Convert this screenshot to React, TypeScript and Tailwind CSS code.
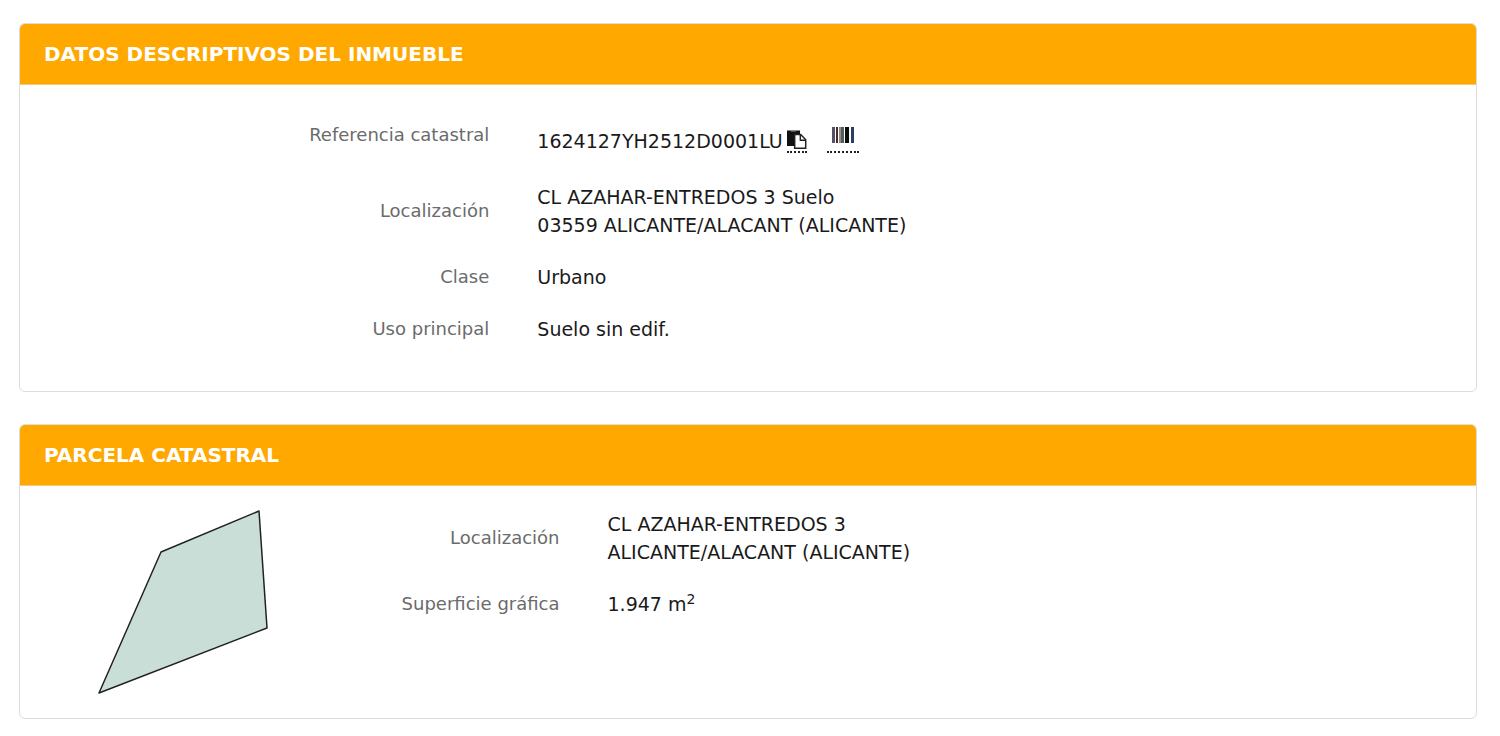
import type { ReactNode } from 'react';

interface PanelProps {
  title: string;
  children: ReactNode;
}

function Panel({ title, children }: PanelProps) {
  return (
    <section className="overflow-hidden rounded-md border border-[#dddddd] bg-white">
      <h2 className="border-b border-[#f3c877] bg-[#ffa800] px-6 py-4 text-[20px] leading-7 font-bold text-white uppercase">
        {title}
      </h2>
      {children}
    </section>
  );
}

function CopyIcon() {
  return (
    <svg viewBox="0 0 20 20" className="block h-5 w-5" aria-hidden="true">
      <path d="M0 1.500h13V6H8v11H0z" fill="#111" />
      <path d="M4 2.500h5" stroke="#555" strokeWidth="1" />
      <path d="M7.700 5.500h6l5 5.300v8.500h-11z" fill="#fff" stroke="#222" strokeWidth="1.500" />
      <path d="M13.300 6v5.200h5" fill="none" stroke="#222" strokeWidth="1.400" />
    </svg>
  );
}

function BarcodeIcon() {
  return (
    <svg viewBox="0 0 22 16" className="block h-4 w-[22px]" aria-hidden="true">
      <rect x="0" y="0" width="3" height="16" fill="#57506a" />
      <rect x="4" y="0" width="2" height="16" fill="#3a3034" />
      <rect x="7" y="0" width="2" height="16" fill="#a88672" />
      <rect x="9" y="0" width="3" height="16" fill="#4c6068" />
      <rect x="13" y="0" width="4" height="16" fill="#0b0b0b" />
      <rect x="19" y="0" width="3" height="16" fill="#2b3f60" />
    </svg>
  );
}

// Outline of the plot
function ParcelMap() {
  return (
    <svg viewBox="0 0 224 184" className="block h-[184px] w-56" role="img" aria-label="Parcela">
      <polygon
        points="215,1 223,118 55,183 117,42"
        fill="#c8ded6"
        stroke="#222"
        strokeWidth="1.500"
        strokeLinejoin="round"
      />
    </svg>
  );
}

function Row({ label, children, narrow }: { label: string; children: ReactNode; narrow?: boolean }) {
  return (
    <div className="flex items-center">
      <dt className={narrow ? 'w-1/4 pr-6 text-right text-[#6b6b6b]' : 'w-1/3 pr-6 text-right text-[#6b6b6b]'}>
        {label}
      </dt>
      <dd className="flex-1 pl-6 text-[19px] text-[#1a1a1a]">{children}</dd>
    </div>
  );
}

export default function App() {
  return (
    <main className="flex flex-col gap-8 bg-white pt-[23px] pr-[23px] pb-4 pl-[19px] font-['Verdana','DejaVu_Sans',sans-serif] text-[18px] leading-7">
      <Panel title="Datos descriptivos del inmueble">
        <dl className="flex flex-col gap-6 px-6 pt-9 pb-12">
          <div className="flex items-start">
            <dt className="w-1/3 pr-6 text-right text-[#6b6b6b]">Referencia catastral</dt>
            <dd className="flex flex-1 items-start pt-1 pb-1 pl-6 text-[19px] text-[#1a1a1a]">
              <span className="pt-0.5">1624127YH2512D0001LU</span>
              <button type="button" aria-label="Copiar referencia" className="mt-1 ml-1 border-b-2 border-dotted border-[#222] pb-0.5">
                <CopyIcon />
              </button>
              <a href="#codigo" aria-label="Código de barras" className="ml-5 border-b-2 border-dotted border-[#222] px-[5px] pt-0.5 pb-2">
                <BarcodeIcon />
              </a>
            </dd>
          </div>
          <Row label="Localización">
            CL AZAHAR-ENTREDOS 3 Suelo
            <br />
            03559 ALICANTE/ALACANT (ALICANTE)
          </Row>
          <Row label="Clase">Urbano</Row>
          <Row label="Uso principal">Suelo sin edif.</Row>
        </dl>
      </Panel>

      <Panel title="Parcela catastral">
        <div className="flex p-6">
          <div className="w-[250px] shrink-0">
            <ParcelMap />
          </div>
          <dl className="flex flex-1 flex-col gap-6">
            <Row label="Localización" narrow>
              CL AZAHAR-ENTREDOS 3
              <br />
              ALICANTE/ALACANT (ALICANTE)
            </Row>
            <Row label="Superficie gráfica" narrow>
              1.947 m<sup className="text-[14px]">2</sup>
            </Row>
          </dl>
        </div>
      </Panel>
    </main>
  );
}
